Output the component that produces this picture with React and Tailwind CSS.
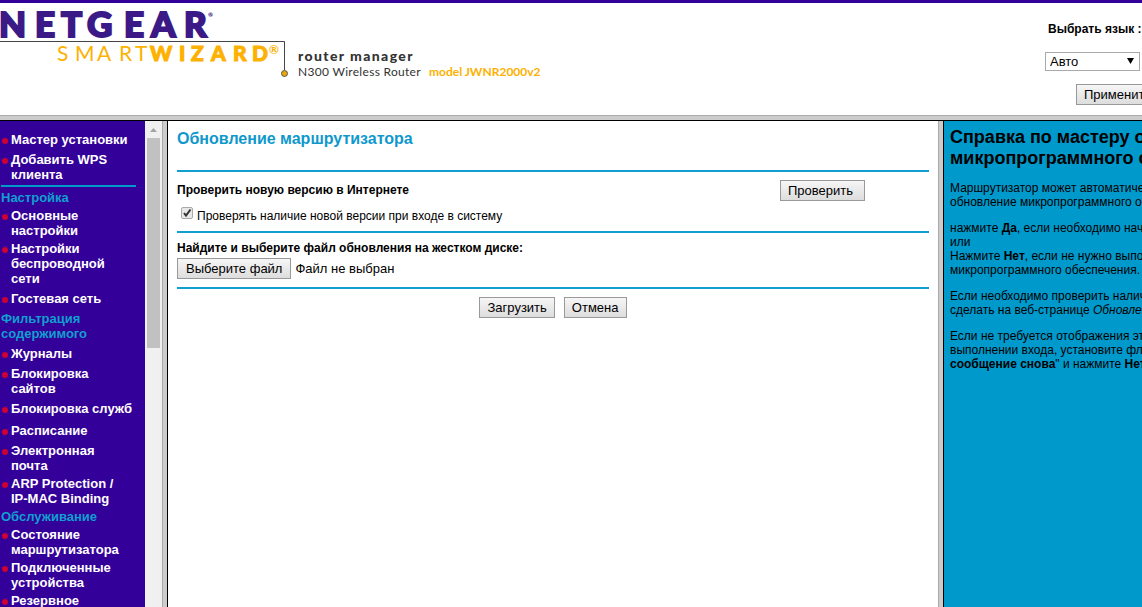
import React, { useState } from 'react'

const MENU = [
  { items: ['Мастер установки', 'Добавить WPS клиента'] },
  {
    title: 'Настройка',
    ruled: true,
    items: ['Основные настройки', 'Настройки беспроводной сети', 'Гостевая сеть'],
  },
  {
    title: 'Фильтрация содержимого',
    items: [
      'Журналы',
      'Блокировка сайтов',
      'Блокировка служб',
      'Расписание',
      'Электронная почта',
      'ARP Protection /\nIP-MAC Binding',
    ],
  },
  {
    title: 'Обслуживание',
    items: ['Состояние маршрутизатора', 'Подключенные устройства', 'Резервное копирование'],
  },
]

function Logo() {
  return (
    <svg width="560" height="86" viewBox="0 0 560 86" className="block shrink-0 font-[Lato,sans-serif]">
      <g className="fill-[#3b1a87] text-[35px] font-black">
        <text x="-1 35 61 87 124 151 184" y="34" stroke="#3b1a87" strokeWidth="2">NETGEAR</text>
        <text x="208" y="14" className="text-[6px]">®</text>
      </g>
      <path d="M0 38.5H284.5V67" fill="none" stroke="#444" />
      <g className="fill-[#fdb100] text-[21px]">
        <text x="57 75 97 119 135" y="58" className="font-normal">SMART</text>
        <text x="150 179 191 211 233 252" y="58" className="font-black" stroke="#fdb100">WIZARD</text>
        <text x="269" y="51" className="text-[12px] font-bold">®</text>
      </g>
      <circle cx="284.500" cy="70.500" r="3" fill="#e9a70c" stroke="#555" />
      <g className="fill-[#333]">
        <text x="298" y="58" className="text-[14px] font-black tracking-widest">router manager</text>
        <text x="298" y="73" className="text-[12px] tracking-wide">N300 Wireless Router</text>
        <text x="429" y="73" className="fill-[#fdb100] text-[12px] font-bold">model JWNR2000v2</text>
      </g>
    </svg>
  )
}

function Button({ children, className = '' }) {
  return (
    <button
      type="button"
      className={`h-[21px] shrink-0 whitespace-nowrap border border-[#999] bg-linear-to-b from-[#f6f6f6] to-[#dddddd] px-[7px] text-[13px] leading-[19px] ${className}`}
    >
      {children}
    </button>
  )
}

function Rule() {
  return <hr className="h-0.5 border-0 bg-[#119fd0]" />
}

function Divider() {
  return <div className="w-1.5 shrink-0 border-l border-r border-l-[#aaa] border-r-black bg-[#ccc]" />
}

function Header() {
  const [lang, setLang] = useState('auto')

  return (
    <header className="flex h-[115px] shrink-0 justify-between border-t-[3px] border-[#330099] bg-white">
      <Logo />
      <form className="w-[97px] shrink-0 pt-[19px]">
        <label htmlFor="lang" className="block whitespace-nowrap pl-[3px] text-xs leading-[14px] font-bold">
          Выбрать язык :
        </label>
        <div className="relative mt-4 mr-0.5">
          <select
            id="lang"
            value={lang}
            onChange={(e) => setLang(e.target.value)}
            className="block h-[19px] w-full appearance-none border border-[#a9a9a9] bg-white pl-1 text-[13px] leading-[17px]"
          >
            <option value="auto">Авто</option>
            <option value="ru">Русский</option>
            <option value="en">English</option>
          </select>
          <svg width="7" height="6" viewBox="0 0 7 6" className="pointer-events-none absolute top-1.5 right-1.5">
            <path d="M0 0H7L3.500 6Z" />
          </svg>
        </div>
        <Button className="mt-[13px] ml-[31px]">Применить</Button>
      </form>
    </header>
  )
}

function Sidebar() {
  return (
    <div className="flex w-[162px] shrink-0">
      <nav className="min-w-0 flex-1 overflow-hidden bg-[#330099] pt-2 pr-[9px] text-[13px] leading-[15px] font-bold">
        {MENU.map((group, i) => (
          <section key={i}>
            {group.ruled && <hr className="mt-px mb-0.5 ml-px h-0.5 border-0 bg-[#0099cc]" />}
            {group.title && <h2 className="pt-px pb-0.5 pl-px text-[#119fd0]">{group.title}</h2>}
            <ul>
              {group.items.map((item) => (
                <li key={item} className="flex min-h-[22px] items-center pt-px pr-0.5 pb-0.5">
                  <a href="#" className="flex whitespace-pre-line text-white">
                    <span className="mt-1.5 mr-[3px] ml-0.5 size-1.5 shrink-0 rounded-full bg-[#cc0033]" />
                    {item}
                  </a>
                </li>
              ))}
            </ul>
          </section>
        ))}
      </nav>
      {/* scroll bar */}
      <div className="flex w-[17px] shrink-0 flex-col items-center bg-[#f0f0f0]">
        <svg width="17" height="17" viewBox="0 0 17 17" className="shrink-0">
          <path d="M5 11L8.500 7L12 11Z" fill="#a3a3a3" />
        </svg>
        <div className="h-[210px] w-[13px] shrink-0 bg-[#c1c1c1]" />
      </div>
    </div>
  )
}

function Upgrade() {
  const [check, setCheck] = useState(true)

  return (
    <main className="min-w-0 flex-1 bg-white px-[9px] pt-2 text-xs leading-[14px]">
      <h1 className="mb-[21px] text-base leading-5 font-bold text-[#0f98cc]">Обновление маршрутизатора</h1>
      <Rule />
      <div className="flex items-start justify-between pt-2 pr-16">
        <h2 className="pt-[3px] font-bold">Проверить новую версию в Интернете</h2>
        <Button className="w-[85px] pr-3">Проверить</Button>
      </div>
      <label className="mt-1.5 mb-2 flex h-4 items-start pl-1">
        <span className="relative mr-1 size-3 shrink-0">
          <input
            type="checkbox"
            checked={check}
            onChange={(e) => setCheck(e.target.checked)}
            className="block size-3 appearance-none rounded-xs border border-[#aaa] bg-[#e8e8e8]"
          />
          {check && (
            <svg width="12" height="12" viewBox="0 0 12 12" className="pointer-events-none absolute inset-0">
              <path d="M3 6L5 8.500L9.500 2.500" fill="none" stroke="#333" strokeWidth="2" />
            </svg>
          )}
        </span>
        <span className="pt-0.5">Проверять наличие новой версии при входе в систему</span>
      </label>
      <Rule />
      <h2 className="mt-2 mb-[3px] font-bold">Найдите и выберите файл обновления на жестком диске:</h2>
      <div className="mb-2 flex items-center text-[13px]">
        <input id="firmware" type="file" className="sr-only" />
        <label
          htmlFor="firmware"
          className="mr-1 h-[21px] border border-[#999] bg-linear-to-b from-[#f6f6f6] to-[#dddddd] px-2 leading-[19px]"
        >
          Выберите файл
        </label>
        <span>Файл не выбран</span>
      </div>
      <Rule />
      <div className="mt-2 flex justify-center gap-[9px]">
        <Button>Загрузить</Button>
        <Button>Отмена</Button>
      </div>
    </main>
  )
}

function Help() {
  return (
    <aside className="w-[198px] shrink-0 overflow-hidden bg-[#0099cc] pt-1.5 pl-1.5 text-xs leading-[14px] whitespace-nowrap">
      <h2 className="mb-3 text-lg leading-[21px] font-bold">
        Справка по мастеру обновления
        <br />
        микропрограммного обеспечения
      </h2>
      <p className="mb-3">
        Маршрутизатор может автоматически
        <br />
        обновление микропрограммного обеспечения
      </p>
      <p className="mb-3">
        нажмите <b>Да</b>, если необходимо начать
        <br />
        или
        <br />
        Нажмите <b>Нет</b>, если не нужно выполнять
        <br />
        микропрограммного обеспечения.
      </p>
      <p className="mb-3">
        Если необходимо проверить наличие
        <br />
        сделать на веб-странице <i>Обновление</i>
      </p>
      <p>
        Если не требуется отображения этого
        <br />
        выполнении входа, установите флажок
        <br />
        <b>сообщение снова</b>" и нажмите <b>Нет</b>.
      </p>
    </aside>
  )
}

export default function App() {
  return (
    <div className="flex h-screen flex-col overflow-hidden bg-white font-['Liberation_Sans',Arial,sans-serif] text-black">
      <Header />
      <div className="h-1.5 shrink-0 border-t border-b border-t-[#aaa] border-b-black bg-[#ccc]" />
      <div className="flex min-h-0 flex-1">
        <Sidebar />
        <Divider />
        <Upgrade />
        <Divider />
        <Help />
      </div>
    </div>
  )
}
